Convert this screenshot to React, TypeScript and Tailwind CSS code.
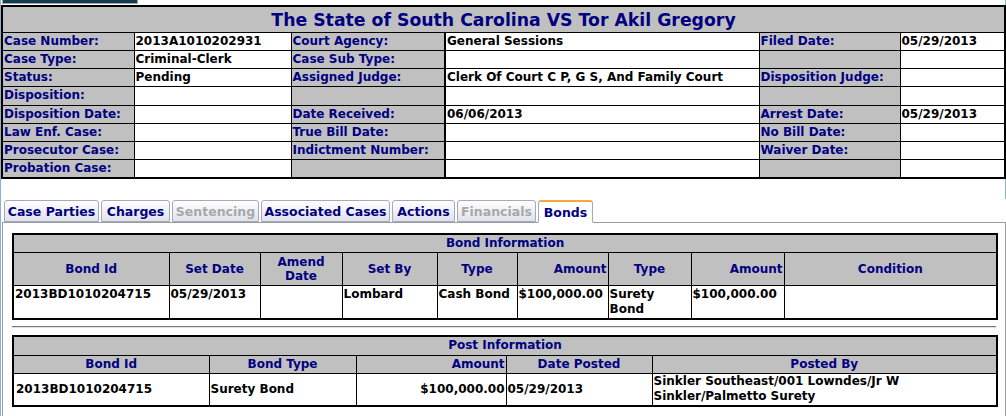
import React from "react";

const font = { fontFamily: '"DejaVu Sans", Verdana, sans-serif' };

const caseRows: string[][] = [
  ["Case Number:", "2013A1010202931", "Court Agency:", "General Sessions", "Filed Date:", "05/29/2013"],
  ["Case Type:", "Criminal-Clerk", "Case Sub Type:", "", "", ""],
  ["Status:", "Pending", "Assigned Judge:", "Clerk Of Court C P, G S, And Family Court", "Disposition Judge:", ""],
  ["Disposition:", "", "", "", "", ""],
  ["Disposition Date:", "", "Date Received:", "06/06/2013", "Arrest Date:", "05/29/2013"],
  ["Law Enf. Case:", "", "True Bill Date:", "", "No Bill Date:", ""],
  ["Prosecutor Case:", "", "Indictment Number:", "", "Waiver Date:", ""],
  ["Probation Case:", "", "", "", "", ""],
];

const tabs = [
  { name: "Case Parties", w: "w-[95px]", state: "on" },
  { name: "Charges", w: "w-[69px]", state: "on" },
  { name: "Sentencing", w: "w-[87px]", state: "off" },
  { name: "Associated Cases", w: "w-[129px]", state: "on" },
  { name: "Actions", w: "w-[63px]", state: "on" },
  { name: "Financials", w: "w-[79px]", state: "off" },
  { name: "Bonds", w: "w-[55px]", state: "active" },
];

const Label = ({ children }: { children?: React.ReactNode }) => (
  <td className="border border-black bg-[#c0c0c0] px-[1px] py-0 text-left align-middle text-[#000080]">{children}</td>
);

const Value = ({ children, thick }: { children?: React.ReactNode; thick?: boolean }) => (
  <td className={"border border-black bg-white px-[1px] py-0 text-left align-middle text-black " + (thick ? "border-l-2" : "")}>
    {children}
  </td>
);

const Head = ({ children, right }: { children: React.ReactNode; right?: boolean }) => (
  <th className={"border border-black bg-[#c0c0c0] px-[1px] py-0 font-bold leading-[14px] text-[#000080] " + (right ? "text-right" : "text-center")}>
    {children}
  </th>
);

export default function App() {
  return (
    <div style={font} className="h-[416px] w-[1006px] overflow-hidden border-l border-[#86b2cc] bg-white text-[12px] font-bold">
      <div className="border-r border-[#86b2cc] pr-[1px]">
        <div className="ml-[1px] h-[4px] w-[136px] border-x border-b border-[#9aa5ad] bg-[#163a4e]" />
        <table className="mt-[1px] w-[1003px] table-fixed border-2 border-black">
          <colgroup>
            <col className="w-[132px]" />
            <col className="w-[157px]" />
            <col className="w-[154px]" />
            <col className="w-[314px]" />
            <col className="w-[141px]" />
            <col className="w-[105px]" />
          </colgroup>
          <tbody>
            <tr className="h-[26px]">
              <td colSpan={6} className="border border-black bg-[#c0c0c0] pt-[2px] text-center align-middle text-[17.3px] leading-[20px] text-[#000080]">
                The State of South Carolina VS Tor Akil Gregory
              </td>
            </tr>
            {caseRows.map((r, i) => (
              <tr key={i} className="h-[18.25px] leading-[15px]">
                <Label>{r[0]}</Label>
                <Value>{r[1]}</Value>
                <Label>{r[2]}</Label>
                <Value thick>{r[3]}</Value>
                <Label>{r[4]}</Label>
                <Value>{r[5]}</Value>
              </tr>
            ))}
          </tbody>
        </table>
        <div className="h-[20px]" />
      </div>

      <div className="ml-[1px]">
        <div className="flex h-[23px] items-end gap-[2px] pl-[2px]">
          {tabs.map((t) => (
            <div
              key={t.name}
              className={
                "relative flex items-center justify-center rounded-t-[3px] border border-[#a3aabb] pt-[3px] text-[12.5px] " +
                t.w +
                (t.state === "active"
                  ? " top-[1px] h-[23px] border-t-2 border-t-[#f4a93b] border-b-white bg-white text-[#000080]"
                  : t.state === "off"
                  ? " h-[22px] bg-gradient-to-b from-white to-[#dfe2ec] text-[#a8a8a8]"
                  : " h-[22px] bg-gradient-to-b from-white to-[#dfe2ec] text-[#000080]")
              }
            >
              {t.name}
            </div>
          ))}
        </div>
        <div className="h-[197px] border border-[#9b9b9b] pl-[9px] pr-[8px] pt-[10px]">
          <table className="w-[984px] table-fixed border-2 border-black">
            <colgroup>
              <col className="w-[156px]" />
              <col className="w-[91px]" />
              <col className="w-[82px]" />
              <col className="w-[95px]" />
              <col className="w-[80px]" />
              <col className="w-[91px]" />
              <col className="w-[83px]" />
              <col className="w-[93px]" />
              <col className="w-[213px]" />
            </colgroup>
            <tbody>
              <tr className="h-[18px]">
                <th colSpan={9} className="border border-black bg-[#c0c0c0] py-0 text-center leading-[15px] text-[#000080]">
                  Bond Information
                </th>
              </tr>
              <tr className="h-[33px]">
                <Head>Bond Id</Head>
                <Head>Set Date</Head>
                <Head>Amend Date</Head>
                <Head>Set By</Head>
                <Head>Type</Head>
                <Head right>Amount</Head>
                <Head>Type</Head>
                <Head right>Amount</Head>
                <Head>Condition</Head>
              </tr>
              <tr className="h-[34px] leading-[15px]">
                <td className="border border-black px-[1px] pt-[1px] align-top">2013BD1010204715</td>
                <td className="border border-black px-[1px] pt-[1px] align-top">05/29/2013</td>
                <td className="border border-black px-[1px] pt-[1px] align-top"></td>
                <td className="border border-black px-[1px] pt-[1px] align-top">Lombard</td>
                <td className="border border-black px-[1px] pt-[1px] align-top whitespace-nowrap">Cash Bond</td>
                <td className="border border-black px-[1px] pt-[1px] align-top whitespace-nowrap">$100,000.00</td>
                <td className="border border-black px-[1px] pt-[1px] align-top">Surety Bond</td>
                <td className="border border-black px-[1px] pt-[1px] align-top whitespace-nowrap">$100,000.00</td>
                <td className="border border-black px-[1px] pt-[1px] align-top"></td>
              </tr>
            </tbody>
          </table>

          <div className="mb-[7px] mt-[6px] w-[984px] border-t border-b border-t-[#7a7a7a] border-b-[#e0e0e0]" />

          <table className="w-[984px] table-fixed border-2 border-black">
            <colgroup>
              <col className="w-[196px]" />
              <col className="w-[147px]" />
              <col className="w-[150px]" />
              <col className="w-[146px]" />
              <col className="w-[345px]" />
            </colgroup>
            <tbody>
              <tr className="h-[19px]">
                <th colSpan={5} className="border border-black bg-[#c0c0c0] py-0 text-center leading-[15px] text-[#000080]">
                  Post Information
                </th>
              </tr>
              <tr className="h-[18px]">
                <Head>Bond Id</Head>
                <Head>Bond Type</Head>
                <Head right>Amount</Head>
                <Head>Date Posted</Head>
                <Head>Posted By</Head>
              </tr>
              <tr className="h-[33px] leading-[15px]">
                <td className="border border-black px-[2px] align-middle">2013BD1010204715</td>
                <td className="border border-black px-[1px] align-middle">Surety Bond</td>
                <td className="border border-black px-[1px] text-right align-middle">$100,000.00</td>
                <td className="border border-black px-[1px] align-middle">05/29/2013</td>
                <td className="border border-black px-[1px] align-middle">Sinkler Southeast/001 Lowndes/Jr W Sinkler/Palmetto Surety</td>
              </tr>
            </tbody>
          </table>
        </div>
      </div>
    </div>
  );
}
